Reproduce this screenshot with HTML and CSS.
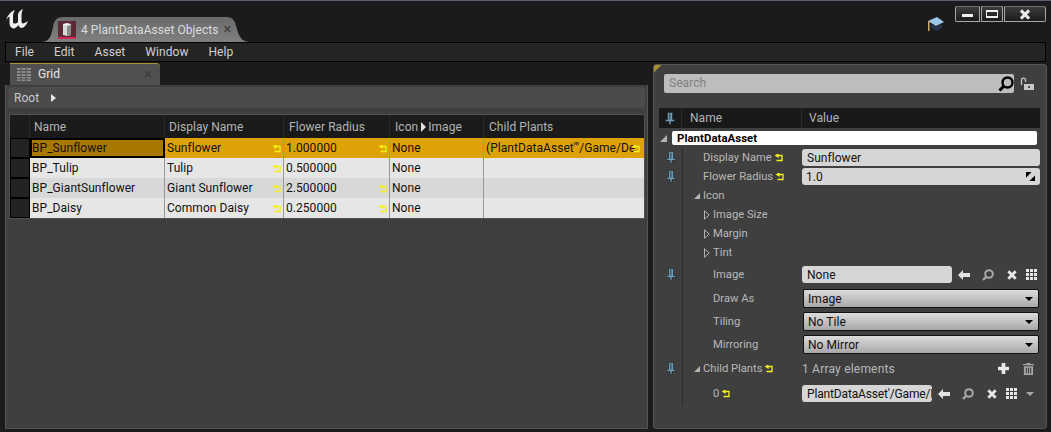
FILE: index.html
```html
<!DOCTYPE html>
<html lang="en">
<head>
    <meta charset="UTF-8">
    <title>4 PlantDataAsset Objects</title>
    <link rel="stylesheet" href="styles.css">
</head>
<body>
    <!-- Shared icons -->
    <svg class="sprites" width="0" height="0">
        <symbol id="reset" viewBox="0 0 8 8"><path d="M2.5 1.5H7V6.5H1.5M3 0.2V2.8L1 1.5Z" fill="none" stroke="#f4f01e" stroke-width="1.3"/></symbol>
        <symbol id="pin" viewBox="0 0 10 13"><path d="M2.5 .5H7.5V7.5H9.5V9.5H6V12.5H4V9.5H.5V7.5H2.5Z" fill="#6f9cb2" stroke="#1e2a30" stroke-width=".7"/><path d="M4 1.5H5.5V7.5H4Z" fill="#3e5866"/></symbol>
        <symbol id="arrow" viewBox="0 0 12 10"><path d="M0 5 5 0V3H12V7H5V10Z" fill="#e2e2e2"/></symbol>
        <symbol id="glass" viewBox="0 0 12 12"><circle cx="7" cy="5" r="3.8" fill="none" stroke="#a8a8a8" stroke-width="2"/><path d="M4.2 7.8 1 11" stroke="#a8a8a8" stroke-width="2.4"/></symbol>
        <symbol id="cross" viewBox="0 0 10 10"><path d="M1.3 1.3 8.7 8.7M8.7 1.3 1.3 8.7" stroke="#e8e8e8" stroke-width="2.8"/></symbol>
        <symbol id="cells" viewBox="0 0 11 11"><path d="M0 0H3V3H0ZM4 0H7V3H4ZM8 0H11V3H8ZM0 4H3V7H0ZM4 4H7V7H4ZM8 4H11V7H8ZM0 8H3V11H0ZM4 8H7V11H4ZM8 8H11V11H8Z" fill="#e6e6e6"/></symbol>
        <symbol id="tri-closed" viewBox="0 0 6 10"><path d="M.5 .8 5.2 5 .5 9.2Z" fill="none" stroke="#b4b4b4"/></symbol>
    </svg>

    <div class="window">
        <header class="titlebar">
            <svg class="logo" viewBox="0 0 24 20" width="24" height="20">
                <path d="M1 12C2 7 5 3 10 1 8 4 8 6 8 8V13C8 15 11 15 13 13V6C13 4 14 2 18 0 17 2 16.5 4 16.5 6V13C17 15 19 15 23 12 22 15 20 18 17 19 15 19 14 18 13.5 16 11 19 9 20 7 19 5 18 4.5 16 4.5 13V8C4.5 7 2 9 1 12Z" fill="#f0f0f0"/>
            </svg>
            <div class="doc-tab">
                <svg class="doc-icon" viewBox="0 0 18 18" width="18" height="18">
                    <rect width="18" height="18" fill="#5c2a34"/>
                    <rect y="16" width="18" height="2" fill="#d02858"/>
                    <path d="M5 4 13 3V14L9 15 5 14Z" fill="#d8d8d8"/>
                    <path d="M9 5 13 4V14L9 15Z" fill="#8a8a8a"/>
                    <path d="M5 3 9 2 13 3 9 4.5 5 4Z" fill="#f4f4f4"/>
                </svg>
                <span class="doc-title">4 PlantDataAsset Objects</span>
                <span class="tab-close">&#215;</span>
            </div>
            <svg class="cap" viewBox="0 0 16 16" width="16" height="16">
                <path d="M3 8 9 11 14 8V12L9 15 3 12Z" fill="#24344a"/>
                <path d="M0 5 9 1 16 6 8 10Z" fill="#9cc4e4"/>
                <path d="M0 5V15H1.5V5Z" fill="#d0a868"/>
            </svg>
            <div class="win-buttons">
                <button class="win-btn win-min"><i></i></button>
                <button class="win-btn win-max"><i></i></button>
                <button class="win-btn win-close">
                    <svg viewBox="0 0 10 10" width="14" height="11"><use href="#cross"/></svg>
                </button>
            </div>
        </header>

        <nav class="menubar">
            <span>File</span>
            <span>Edit</span>
            <span>Asset</span>
            <span>Window</span>
            <span>Help</span>
        </nav>

        <main class="workspace">
            <section class="grid-panel">
                <div class="panel-tab">
                    <svg class="grid-glyph" viewBox="0 0 14 13" width="14" height="13">
                        <path d="M0 0H14V13H0Z" fill="#8c8c8c"/>
                        <path d="M0 2.5H14M0 5.5H14M0 8.5H14M0 11H14M4 0V13M9 0V13" stroke="#505050"/>
                    </svg>
                    <span class="panel-tab-name">Grid</span>
                    <span class="tab-close">&#215;</span>
                </div>
                <div class="panel-body">
                    <div class="breadcrumb">Root <b class="crumb-arrow"></b></div>
                    <div class="table">
                        <div class="t-row t-head">
                            <div class="t-gutter"></div>
                            <div class="t-cell c-name">Name</div>
                            <div class="t-cell c-display">Display Name</div>
                            <div class="t-cell c-radius">Flower Radius</div>
                            <div class="t-cell c-icon">Icon<b class="head-arrow"></b>Image</div>
                            <div class="t-cell c-child">Child Plants</div>
                        </div>
                        <div class="t-row selected">
                            <div class="t-gutter"></div>
                            <div class="t-cell c-name current">BP_Sunflower</div>
                            <div class="t-cell c-display">Sunflower<svg class="reset"><use href="#reset"/></svg></div>
                            <div class="t-cell c-radius">1.000000<svg class="reset"><use href="#reset"/></svg></div>
                            <div class="t-cell c-icon">None</div>
                            <div class="t-cell c-child">(PlantDataAsset'"/Game/De<svg class="reset"><use href="#reset"/></svg></div>
                        </div>
                        <div class="t-row">
                            <div class="t-gutter"></div>
                            <div class="t-cell c-name">BP_Tulip</div>
                            <div class="t-cell c-display">Tulip<svg class="reset"><use href="#reset"/></svg></div>
                            <div class="t-cell c-radius">0.500000</div>
                            <div class="t-cell c-icon">None</div>
                            <div class="t-cell c-child"></div>
                        </div>
                        <div class="t-row alt">
                            <div class="t-gutter"></div>
                            <div class="t-cell c-name">BP_GiantSunflower</div>
                            <div class="t-cell c-display">Giant Sunflower<svg class="reset"><use href="#reset"/></svg></div>
                            <div class="t-cell c-radius">2.500000<svg class="reset"><use href="#reset"/></svg></div>
                            <div class="t-cell c-icon">None</div>
                            <div class="t-cell c-child"></div>
                        </div>
                        <div class="t-row">
                            <div class="t-gutter"></div>
                            <div class="t-cell c-name">BP_Daisy</div>
                            <div class="t-cell c-display">Common Daisy<svg class="reset"><use href="#reset"/></svg></div>
                            <div class="t-cell c-radius">0.250000<svg class="reset"><use href="#reset"/></svg></div>
                            <div class="t-cell c-icon">None</div>
                            <div class="t-cell c-child"></div>
                        </div>
                    </div>
                </div>
            </section>

            <aside class="details-panel">
                <div class="search-row">
                    <div class="search-box">
                        <span>Search</span>
                        <svg viewBox="0 0 16 16" width="16" height="16">
                            <circle cx="9.5" cy="6.5" r="5" fill="none" stroke="#000" stroke-width="2.4"/>
                            <path d="M6 10 1.5 14.5" stroke="#000" stroke-width="3"/>
                        </svg>
                    </div>
                    <svg class="lock" viewBox="0 0 14 14" width="14" height="14">
                        <path d="M1.5 8V3C1.5 .5 5.5 .5 5.5 3V5" fill="none" stroke="#c8c8c8" stroke-width="1.3"/>
                        <path d="M4 7H14V13H4Z" fill="#c8c8c8"/>
                        <path d="M8 9H10V11H8Z" fill="#555"/>
                    </svg>
                </div>

                <div class="details-head">
                    <div class="head-pin"><svg class="pin"><use href="#pin"/></svg></div>
                    <div class="head-name">Name</div>
                    <div class="head-value">Value</div>
                </div>

                <div class="category">
                    <b class="tri-open"></b>
                    <div class="category-name">PlantDataAsset</div>
                </div>

                <div class="props">
                    <div class="prop h17 mt4">
                        <svg class="pin"><use href="#pin"/></svg>
                        <div class="prop-name">Display Name<svg class="reset"><use href="#reset"/></svg></div>
                        <div class="field">Sunflower</div>
                    </div>
                    <div class="prop h17 mt2">
                        <svg class="pin"><use href="#pin"/></svg>
                        <div class="prop-name">Flower Radius<svg class="reset"><use href="#reset"/></svg></div>
                        <div class="field field-num">1.0
                            <svg viewBox="0 0 8 8" width="9" height="9"><path d="M0 0H5L0 5ZM8 8H3L8 3Z" fill="#000"/></svg>
                        </div>
                    </div>
                    <div class="prop h19 mt1">
                        <div class="prop-name lvl-tri"><b class="tri-small"></b>Icon</div>
                    </div>
                    <div class="prop h19">
                        <div class="prop-name lvl-sub"><svg class="tri-closed"><use href="#tri-closed"/></svg>Image Size</div>
                    </div>
                    <div class="prop h19">
                        <div class="prop-name lvl-sub"><svg class="tri-closed"><use href="#tri-closed"/></svg>Margin</div>
                    </div>
                    <div class="prop h19">
                        <div class="prop-name lvl-sub"><svg class="tri-closed"><use href="#tri-closed"/></svg>Tint</div>
                    </div>
                    <div class="prop h17 mt4">
                        <svg class="pin"><use href="#pin"/></svg>
                        <div class="prop-name lvl-2">Image</div>
                        <div class="field asset-field">None</div>
                        <div class="tools">
                            <svg class="t-arrow"><use href="#arrow"/></svg>
                            <svg class="t-glass"><use href="#glass"/></svg>
                            <svg class="t-cross"><use href="#cross"/></svg>
                            <svg class="t-cells"><use href="#cells"/></svg>
                        </div>
                    </div>
                    <div class="prop h19 mt6">
                        <div class="prop-name lvl-2 no-pin">Draw As</div>
                        <div class="combo">Image<b class="combo-arrow"></b></div>
                    </div>
                    <div class="prop h19 mt4">
                        <div class="prop-name lvl-2 no-pin">Tiling</div>
                        <div class="combo">No Tile<b class="combo-arrow"></b></div>
                    </div>
                    <div class="prop h19 mt4">
                        <div class="prop-name lvl-2 no-pin">Mirroring</div>
                        <div class="combo">No Mirror<b class="combo-arrow"></b></div>
                    </div>
                    <div class="prop h19 mt5">
                        <svg class="pin"><use href="#pin"/></svg>
                        <div class="prop-name lvl-tri-pin"><b class="tri-small"></b>Child Plants<svg class="reset"><use href="#reset"/></svg></div>
                        <div class="array-info">1 Array elements</div>
                        <div class="array-tools">
                            <svg viewBox="0 0 12 12" width="11" height="11"><path d="M4 0H8V4H12V8H8V12H4V8H0V4H4Z" fill="#e8e8e8"/></svg>
                            <svg viewBox="0 0 12 13" width="11" height="12"><path d="M4 0H8V1H12V2.5H0V1H4ZM1 3.5H11V13H1ZM3 5V11.5H4.2V5ZM5.4 5V11.5H6.6V5ZM7.8 5V11.5H9V5Z" fill="#a8a8a8" fill-rule="evenodd"/></svg>
                        </div>
                    </div>
                    <div class="prop h17 mt7">
                        <div class="prop-name lvl-2 no-pin">0<svg class="reset"><use href="#reset"/></svg></div>
                        <div class="field array-field">PlantDataAsset'/Game/I</div>
                        <div class="tools">
                            <svg class="t-arrow"><use href="#arrow"/></svg>
                            <svg class="t-glass"><use href="#glass"/></svg>
                            <svg class="t-cross"><use href="#cross"/></svg>
                            <svg class="t-cells"><use href="#cells"/></svg>
                            <b class="more-arrow"></b>
                        </div>
                    </div>
                </div>
            </aside>
        </main>
    </div>
</body>
</html>
```

FILE: styles.css
```css
/* General */
html, body {
    margin: 0;
    padding: 0;
}

body {
    font-family: 'Roboto', 'Liberation Sans', sans-serif;
    font-size: 12px;
    letter-spacing: 0.05px;
    color: #c8c8c8;
    background-color: #1b1b1b;
}

.sprites {
    display: block;
    height: 0;
}

.window {
    width: 1051px;
    height: 432px;
    display: flex;
    flex-direction: column;
    overflow: hidden;
    background-color: #1b1b1b;
    border-top: 1px solid #5a6070;
    box-sizing: border-box;
}

/* Title bar */
.titlebar {
    height: 41px;
    flex: none;
    display: flex;
    align-items: flex-start;
}

.logo {
    margin: 8px 0 0 5px;
}

.doc-tab {
    margin: 16px 0 0 12px;
    width: 209px;
    height: 25px;
    display: flex;
    align-items: center;
    padding-left: 17px;
    box-sizing: border-box;
    background: linear-gradient(#6a6a6a, #808080);
    clip-path: path('M0 25C8 25 10 20 12 10C13 3 16 0 22 0L186 0C192 0 194 4 196 12C198 21 202 25 209 25Z');
}

.doc-icon {
    flex: none;
}

.doc-title {
    margin-left: 5px;
    color: #dcdcdc;
    white-space: nowrap;
}

.tab-close {
    color: #3c3c3c;
    font-size: 15px;
    line-height: 1;
}

.doc-tab .tab-close {
    margin-left: 5px;
}

.cap {
    margin: 15px 0 0 678px;
}

.win-buttons {
    margin: 5px 0 0 11px;
    display: flex;
    gap: 1px;
}

.win-btn {
    height: 16px;
    padding: 0;
    display: flex;
    align-items: center;
    justify-content: center;
    border: 1px solid #a8a8a8;
    border-top-color: #707070;
    background: linear-gradient(#3c3c3c, #1c1c1c);
}

.win-min {
    width: 25px;
    border-radius: 2px 0 0 2px;
}

.win-min i {
    width: 11px;
    height: 3px;
    margin-top: 2px;
    background-color: #f0f0f0;
}

.win-max {
    width: 22px;
}

.win-max i {
    width: 12px;
    height: 8px;
    box-sizing: border-box;
    border: 1px solid #f0f0f0;
    border-top-width: 2px;
    border-bottom-width: 2px;
}

.win-close {
    width: 42px;
    border-radius: 0 2px 2px 0;
}

/* Menu */
.menubar {
    height: 20px;
    flex: none;
    margin: 0 5px;
    padding-left: 9px;
    display: flex;
    align-items: center;
    gap: 20px;
    box-sizing: border-box;
    border: 1px solid #000;
    background-color: #242424;
    color: #d0d0d0;
}

/* Panels */
.workspace {
    flex: 1;
    display: flex;
    gap: 5px;
    margin: 0 4px 3px 5px;
    min-height: 0;
}

.grid-panel {
    width: 643px;
    display: flex;
    flex-direction: column;
    padding-top: 1px;
}

.panel-tab {
    width: 150px;
    height: 22px;
    flex: none;
    margin-left: 5px;
    display: flex;
    align-items: center;
    padding: 0 0 1px 7px;
    box-sizing: border-box;
    background-color: #505050;
    border-top: 1px solid #a89030;
    border-radius: 0 4px 0 0;
}

.panel-tab-name {
    margin-left: 7px;
    flex: 1;
    color: #e6e6e6;
}

.panel-tab .tab-close {
    margin-right: 8px;
}

.panel-body {
    flex: 1;
    padding: 2px;
    background-color: #3f3f3f;
    border: 1px solid #555;
    border-top: none;
    box-sizing: border-box;
}

.breadcrumb {
    height: 21px;
    padding-left: 6px;
    display: flex;
    align-items: center;
    gap: 12px;
    border-radius: 3px;
    background-color: #4b4b4b;
    color: #c8c8c8;
}

.crumb-arrow {
    width: 0;
    height: 0;
    border-left: 5px solid #e8e8e8;
    border-top: 4px solid transparent;
    border-bottom: 4px solid transparent;
}

/* Table */
.table {
    margin: 7px 0 0 2px;
    width: 634px;
    box-shadow: 0 0 0 1px #515151;
}

.t-row {
    height: 20px;
    display: flex;
    color: #111;
    background-color: #e6e6e6;
}

.t-row.alt {
    background-color: #d8d8d8;
}

.t-row.selected {
    background-color: #dfa206;
}

.t-head {
    height: 23px;
    color: #b4b4b4;
    background: linear-gradient(#1c1c1c, #191919);
}

.t-gutter {
    width: 20px;
    flex: none;
    box-sizing: border-box;
    background-color: #232323;
    border: 1px solid #000;
}

.t-head .t-gutter {
    background-color: transparent;
    border: none;
    border-right: 1px solid #2a2a2a;
}

.t-cell {
    display: flex;
    align-items: center;
    padding-left: 2px;
    box-sizing: border-box;
    border-right: 1px solid #999;
    white-space: nowrap;
    overflow: hidden;
}

.t-head .t-cell {
    padding-left: 5px;
    border-right-color: #2a2a2a;
}

.c-name { width: 135px; }
.c-display { width: 119px; }
.c-radius { width: 106px; }
.c-icon { width: 94px; }
.c-child { width: 160px; border-right: none; }

.t-head .c-name { padding-left: 4px; }
.t-head .c-display { padding-left: 4px; }

.current {
    background-color: #a87800;
    border: 2px solid #000;
    padding-left: 0;
}

.reset {
    width: 8px;
    height: 8px;
    flex: none;
    margin-left: auto;
    margin-right: 2px;
    margin-top: 1px;
}

.c-child .reset {
    margin-left: -3px;
}

.head-arrow {
    width: 0;
    height: 0;
    margin: 0 2px 0 3px;
    border-left: 5px solid #e0e0e0;
    border-top: 5px solid transparent;
    border-bottom: 5px solid transparent;
}

/* Details */
.details-panel {
    width: 394px;
    padding: 9px 0 0 5px;
    margin-top: 2px;
    box-sizing: border-box;
    background:
        linear-gradient(135deg, #a89030 5px, transparent 5px),
        #3f3f3f;
    border: 1px solid #555;
    border-radius: 3px;
}

.search-row {
    display: flex;
    align-items: center;
    height: 19px;
    margin-left: 5px;
}

.search-box {
    width: 350px;
    height: 19px;
    flex: none;
    display: flex;
    align-items: center;
    justify-content: space-between;
    padding: 0 0 0 5px;
    box-sizing: border-box;
    border-radius: 2px;
    background-color: #bdbdbd;
    color: #808080;
}

.search-box span {
    margin-bottom: 1px;
}

.lock {
    margin-left: 6px;
}

.details-head {
    width: 381px;
    height: 20px;
    margin-top: 15px;
    display: flex;
    align-items: center;
    background-color: #191919;
    color: #b4b4b4;
}

.head-pin {
    width: 23px;
    height: 100%;
    display: flex;
    align-items: center;
    justify-content: center;
    border-right: 1px solid #2a2a2a;
    box-sizing: border-box;
}

.head-name {
    width: 120px;
    padding-left: 8px;
    height: 100%;
    display: flex;
    align-items: center;
    box-sizing: border-box;
    border-right: 1px solid #2a2a2a;
}

.head-value {
    padding-left: 7px;
}

.pin {
    width: 10px;
    height: 13px;
    flex: none;
}

.category {
    height: 14px;
    margin-top: 3px;
    display: flex;
    align-items: center;
}

.tri-open {
    width: 0;
    height: 0;
    margin-left: 1px;
    border-bottom: 7px solid #b4b4b4;
    border-left: 7px solid transparent;
}

.category-name {
    width: 365px;
    height: 14px;
    margin-left: 5px;
    padding-left: 5px;
    box-sizing: border-box;
    border-radius: 2px;
    background-color: #fff;
    color: #000;
    font-weight: 700;
    font-size: 11.4px;
    line-height: 14px;
}

/* Property rows */
.props {
    padding-bottom: 4px;
    width: 381px;
    background: linear-gradient(#2c2c2c, #2c2c2c) 23px 0 / 1px 100% no-repeat;
}

.prop {
    display: flex;
    align-items: center;
    padding-left: 6px;
    color: #b8b8b8;
}

.prop > .pin {
    margin: 0 -1px 0 1px;
}

.h17 { height: 17px; }
.h19 { height: 19px; }
.mt1 { margin-top: 1px; }
.mt2 { margin-top: 2px; }
.mt4 { margin-top: 4px; }
.mt5 { margin-top: 5px; }
.mt6 { margin-top: 6px; }
.mt7 { margin-top: 7px; }

.prop-name {
    width: 127px;
    flex: none;
    padding-left: 28px;
    box-sizing: border-box;
    display: flex;
    align-items: center;
    white-space: nowrap;
    font-size: 11.2px;
    letter-spacing: 0;
}

.prop-name .reset {
    margin: 0 0 0 3px;
}

.lvl-2 { padding-left: 38px; }
.lvl-2.no-pin { padding-left: 48px; width: 137px; }

.lvl-tri {
    padding-left: 29px;
}

.lvl-tri-pin {
    padding-left: 19px;
}

.lvl-sub {
    padding-left: 39px;
}

.tri-small {
    width: 0;
    height: 0;
    margin-right: 3px;
    border-bottom: 6px solid #b4b4b4;
    border-left: 6px solid transparent;
}

.tri-closed {
    width: 6px;
    height: 10px;
    flex: none;
    margin-right: 3px;
}

.field {
    height: 17px;
    width: 238px;
    flex: none;
    padding-left: 5px;
    box-sizing: border-box;
    display: flex;
    align-items: center;
    border-radius: 3px;
    background-color: #d6d6d6;
    color: #111;
    white-space: nowrap;
    overflow: hidden;
}

.field-num {
    justify-content: space-between;
    padding: 0 5px 0 4px;
}

.asset-field {
    width: 150px;
}

.array-field {
    width: 130px;
    letter-spacing: -0.15px;
}

.tools {
    display: flex;
    align-items: center;
    margin-left: 6px;
}

.tools svg {
    flex: none;
}

.t-arrow { width: 12px; height: 10px; }
.t-glass { width: 12px; height: 12px; margin-left: 12px; }
.t-cross { width: 10px; height: 10px; margin-left: 13px; }
.t-cells { width: 11px; height: 11px; margin-left: 9px; }

.more-arrow {
    width: 0;
    height: 0;
    margin-left: 9px;
    border-top: 4px solid #a8a8a8;
    border-left: 4px solid transparent;
    border-right: 4px solid transparent;
}

.combo {
    width: 236px;
    height: 19px;
    flex: none;
    margin-left: 1px;
    padding: 0 5px 0 4px;
    box-sizing: border-box;
    display: flex;
    align-items: center;
    justify-content: space-between;
    border: 1px solid #111;
    border-radius: 2px;
    color: #111;
    background: linear-gradient(#dcdcdc, #a8a8a8);
}

.combo-arrow {
    width: 0;
    height: 0;
    border-top: 4px solid #000;
    border-left: 4px solid transparent;
    border-right: 4px solid transparent;
}

.array-info {
    width: 230px;
    flex: none;
    color: #b8b8b8;
    display: flex;
    letter-spacing: 0.2px;
}

.array-tools {
    display: flex;
    align-items: center;
    gap: 14px;
    margin-left: -34px;
}
```
